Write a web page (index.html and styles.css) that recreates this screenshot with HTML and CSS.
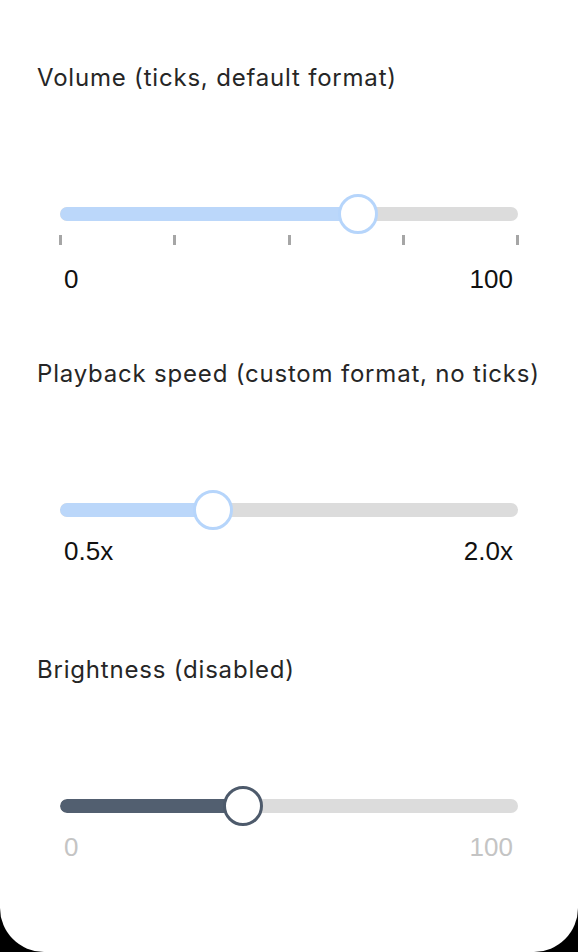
FILE: index.html
```html
<!DOCTYPE html>
<html lang="en">
<head>
  <meta charset="UTF-8" />
  <meta name="viewport" content="width=device-width, initial-scale=1.0"/>
  <title>Sliders</title>
  <link rel="stylesheet" href="styles.css">
</head>
<body>
  <main class="screen">

    <section class="field">
      <h2 class="field-title">Volume (ticks, default format)</h2>
      <div class="slider">
        <div class="track">
          <div class="fill" style="width: 65%"></div>
        </div>
        <div class="thumb" style="left: 65%"></div>
      </div>
      <div class="ticks">
        <span></span><span></span><span></span><span></span><span></span>
      </div>
      <div class="range-labels">
        <span>0</span>
        <span>100</span>
      </div>
    </section>

    <section class="field">
      <h2 class="field-title">Playback speed (custom format, no ticks)</h2>
      <div class="slider">
        <div class="track">
          <div class="fill" style="width: 33.333%"></div>
        </div>
        <div class="thumb" style="left: 33.333%"></div>
      </div>
      <div class="range-labels">
        <span>0.5x</span>
        <span>2.0x</span>
      </div>
    </section>

    <section class="field disabled">
      <h2 class="field-title">Brightness (disabled)</h2>
      <div class="slider">
        <div class="track">
          <div class="fill" style="width: 40%"></div>
        </div>
        <div class="thumb" style="left: 40%"></div>
      </div>
      <div class="range-labels">
        <span>0</span>
        <span>100</span>
      </div>
    </section>

  </main>
</body>
</html>
```

FILE: styles.css
```css
body {
  margin: 0;
  background: #000000;
}

.screen {
  box-sizing: border-box;
  height: 952px;
  padding-top: 63px;
  background: #ffffff;
  border-radius: 0 0 44px 44px;
  overflow: hidden;
}

.field {
  height: 296px;
  padding: 0 37px;
}

.field-title {
  margin: 0;
  font-family: Inter, "Noto Sans", sans-serif;
  font-size: 24px;
  font-weight: 400;
  letter-spacing: 0.8px;
  line-height: 30px;
  color: #262626;
}

/* track + thumb */
.slider {
  position: relative;
  height: 40px;
  margin: 101px 23px 0;
  display: flex;
  align-items: center;
}

.track {
  flex: 1;
  height: 14px;
  border-radius: 7px;
  background: #dcdcdc;
  overflow: hidden;
}

.fill {
  height: 100%;
  background: #bbd7fa;
  border-radius: 7px 0 0 7px;
}

.thumb {
  position: absolute;
  top: 50%;
  box-sizing: border-box;
  width: 40px;
  height: 40px;
  border: 3px solid #b6d5fb;
  border-radius: 50%;
  background: #ffffff;
  transform: translate(-50%, -50%);
}

.ticks {
  display: flex;
  justify-content: space-between;
  height: 10px;
  margin: 1px 22px 0;
}

.ticks span {
  width: 3px;
  height: 10px;
  background: #a6a6a6;
}

.range-labels {
  display: flex;
  justify-content: space-between;
  margin: 5px 28px 0 27px;
  font-family: "Liberation Sans", Arial, sans-serif;
  font-size: 26px;
  line-height: 32px;
  color: #111111;
}

.ticks + .range-labels {
  margin-top: 18px;
}

.disabled .fill {
  background: #525f70;
}

.disabled .thumb {
  border-color: #4d5a6b;
}

.disabled .range-labels {
  color: #c4c4c4;
}
```
